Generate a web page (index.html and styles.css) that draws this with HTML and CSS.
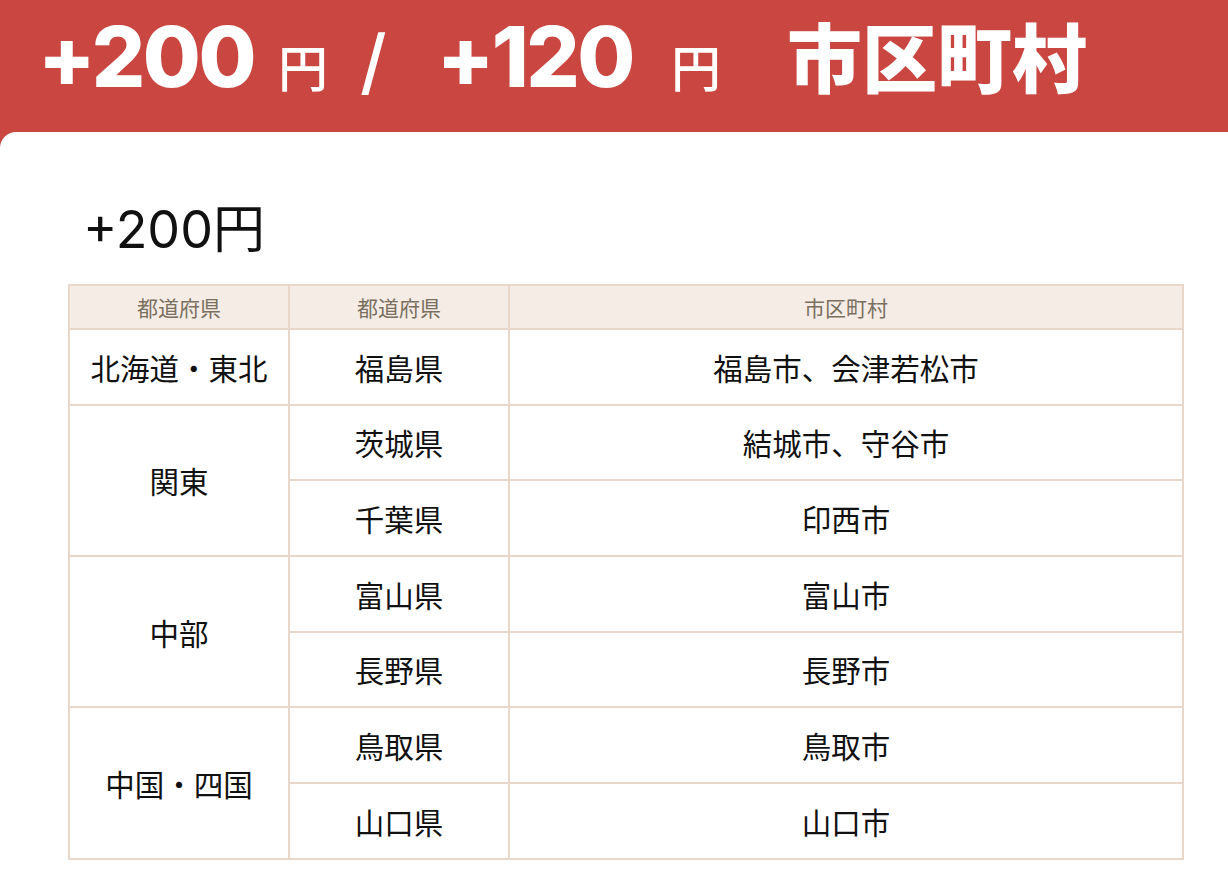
FILE: index.html
```html
<!DOCTYPE html>
<html lang="ja">
<head>
<meta charset="utf-8">
<link rel="stylesheet" href="styles.css">
</head>
<body>
<header class="banner">
  <span class="big">+200</span>
  <span class="yen yen-1">円</span>
  <span class="slash">/</span>
  <span class="big big-2">+120</span>
  <span class="yen yen-2">円</span>
  <span class="title">市区町村</span>
</header>
<main class="card">
  <h2 class="price">+200円</h2>
  <table class="areas">
    <colgroup>
      <col class="c1"><col class="c2"><col class="c3">
    </colgroup>
    <thead>
      <tr><th>都道府県</th><th>都道府県</th><th>市区町村</th></tr>
    </thead>
    <tbody>
      <tr><td>北海道・東北</td><td>福島県</td><td>福島市、会津若松市</td></tr>
      <tr><td rowspan="2">関東</td><td>茨城県</td><td>結城市、守谷市</td></tr>
      <tr><td>千葉県</td><td>印西市</td></tr>
      <tr><td rowspan="2">中部</td><td>富山県</td><td>富山市</td></tr>
      <tr><td>長野県</td><td>長野市</td></tr>
      <tr><td rowspan="2">中国・四国</td><td>鳥取県</td><td>鳥取市</td></tr>
      <tr><td>山口県</td><td>山口市</td></tr>
    </tbody>
  </table>
</main>
</body>
</html>
```

FILE: styles.css
```css
html, body {
  margin: 0;
  padding: 0;
}
body {
  background: #ca4641;
  font-family: "Noto Sans CJK JP", "Noto Sans", sans-serif;
  color: #111;
}
.banner {
  height: 132px;
  box-sizing: border-box;
  display: flex;
  align-items: baseline;
  padding: 0 0 0 38px;
  color: #fff;
  white-space: nowrap;
}
.big {
  font-family: "Inter", "Noto Sans", sans-serif;
  font-weight: 800;
  font-size: 84px;
  line-height: 111px;
  letter-spacing: -2.5px;
}
.big-2 {
  margin-left: 50px;
}
.yen {
  font-family: "Noto Sans CJK JP", sans-serif;
  font-weight: 500;
  font-size: 50px;
  margin-left: 24px;
}
.slash {
  font-family: "Inter", sans-serif;
  font-weight: 500;
  font-size: 72px;
  margin-left: 32px;
}
.yen-2 {
  margin-left: 38px;
}
.title {
  font-family: "Noto Sans CJK JP", sans-serif;
  font-weight: 900;
  font-size: 75px;
  margin-left: 66px;
}
.card {
  background: #fff;
  border-top-left-radius: 16px;
  min-height: 748px;
  padding: 58px 44px 20px 68px;
  box-sizing: border-box;
}
.price {
  margin: 0 0 14px 15px;
  font-family: "Inter", "Noto Sans CJK JP", sans-serif;
  font-weight: 400;
  font-size: 52px;
  line-height: 80px;
}
.areas {
  width: 1116px;
  border-collapse: collapse;
  table-layout: fixed;
  border: 2px solid #e9d8ca;
}
.c1, .c2 { width: 220px; }
.areas th, .areas td {
  border: 2px solid #e9d8ca;
  text-align: center;
  vertical-align: middle;
  padding: 0;
}
.areas th {
  background: #f5ece6;
  color: #7b7060;
  font-weight: 400;
  font-size: 21px;
  height: 42px;
}
.areas td {
  font-size: 29.5px;
  height: 73.67px;
  color: #111;
}
```
